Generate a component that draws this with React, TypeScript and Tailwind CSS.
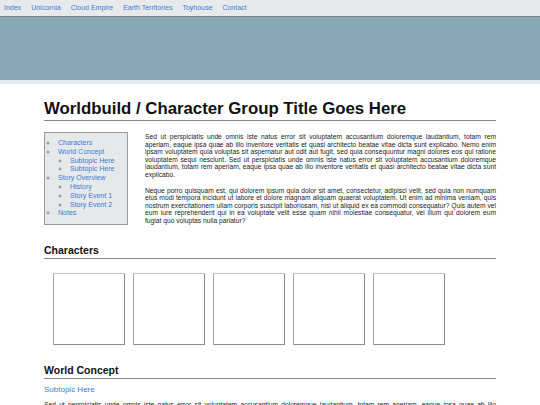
const nav = ["Index", "Unicornia", "Cloud Empire", "Earth Territories", "Toyhouse", "Contact"];

const para1 =
  "Sed ut perspiciatis unde omnis iste natus error sit voluptatem accusantium doloremque laudantium, totam rem aperiam, eaque ipsa quae ab illo inventore veritatis et quasi architecto beatae vitae dicta sunt explicabo. Nemo enim ipsam voluptatem quia voluptas sit aspernatur aut odit aut fugit, sed quia consequuntur magni dolores eos qui ratione voluptatem sequi nesciunt. Sed ut perspiciatis unde omnis iste natus error sit voluptatem accusantium doloremque laudantium, totam rem aperiam, eaque ipsa quae ab illo inventore veritatis et quasi architecto beatae vitae dicta sunt explicabo.";

const para2 =
  "Neque porro quisquam est, qui dolorem ipsum quia dolor sit amet, consectetur, adipisci velit, sed quia non numquam eius modi tempora incidunt ut labore et dolore magnam aliquam quaerat voluptatem. Ut enim ad minima veniam, quis nostrum exercitationem ullam corporis suscipit laboriosam, nisi ut aliquid ex ea commodi consequatur? Quis autem vel eum iure reprehenderit qui in ea voluptate velit esse quam nihil molestiae consequatur, vel illum qui dolorem eum fugiat quo voluptas nulla pariatur?";

function Toc() {
  const link = "text-[#3b7dd6]";
  return (
    <div className="w-[84px] shrink-0 self-start border border-[#9a9a9a] bg-[#e6e8ea] pt-[6px] pb-[6px] pl-[8px]">
      <ul className="list-[circle] pl-[5px] text-[7px] leading-[8.8px] marker:text-[#888]">
        <li className={link}>Characters</li>
        <li className={link}>
          World Concept
          <ul className="list-[circle] pl-[12px]">
            <li>Subtopic Here</li>
            <li>Subtopic Here</li>
          </ul>
        </li>
        <li className={link}>
          Story Overview
          <ul className="list-[circle] pl-[12px]">
            <li>History</li>
            <li>Story Event 1</li>
            <li>Story Event 2</li>
          </ul>
        </li>
        <li className={link}>Notes</li>
      </ul>
    </div>
  );
}

function SectionHeading({ children }: { children: string }) {
  return (
    <h2 className="border-b border-[#8a8a8a] pb-[1px] text-[10.5px] font-bold leading-[13px] text-[#111]">
      {children}
    </h2>
  );
}

export default function App() {
  return (
    <div className="min-h-[405px] bg-white font-['Liberation_Sans',Arial,sans-serif] text-[#222]">
      <nav className="flex h-[17px] items-center gap-[10px] border-b border-[#77848c] bg-[#e8e9eb] px-[4px] text-[7px] text-[#3b7dd6]">
        {nav.map((n) => (
          <a key={n}>{n}</a>
        ))}
      </nav>
      <div className="h-[63px] bg-[#88a8b8]" />
      <div className="h-[4px] bg-[#e6e9ec]" />

      <main className="mx-auto w-[452px] pt-[15px]">
        <h1 className="border-b border-[#8a8a8a] pb-[1px] text-[16.8px] font-bold leading-[20px] text-[#111]">
          Worldbuild / Character Group Title Goes Here
        </h1>

        <div className="mt-[11px] flex gap-[17px]">
          <Toc />
          <div className="flex flex-col gap-[8.5px] pt-[1px] text-justify text-[6.7px] leading-[7.5px] text-[#222]">
            <p>{para1}</p>
            <p>{para2}</p>
          </div>
        </div>

        <div className="mt-[19px]">
          <SectionHeading>Characters</SectionHeading>
          <div className="mt-[14px] flex gap-[8px] pl-[9px]">
            {[0, 1, 2, 3, 4].map((i) => (
              <div
                key={i}
                className="h-[72px] w-[72px] border border-[#8c8c8c] border-t-[#c8c8c8] border-l-[#a8a8a8]"
              />
            ))}
          </div>
        </div>

        <div className="mt-[19px]">
          <SectionHeading>World Concept</SectionHeading>
          <h3 className="mt-[6px] text-[8px] leading-[10px] text-[#3b7dd6]">Subtopic Here</h3>
          <p className="mt-[6px] text-justify text-[6.7px] leading-[7.5px]">{para1}</p>
        </div>
      </main>
    </div>
  );
}
